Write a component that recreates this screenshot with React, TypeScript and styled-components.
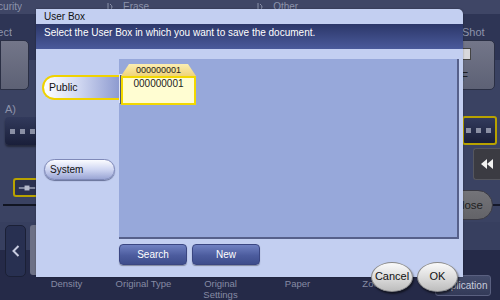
import React from 'react'
import styled, { createGlobalStyle } from 'styled-components'

const GlobalStyle = createGlobalStyle`
  html, body {
    margin: 0;
    padding: 0;
    overflow: hidden;
    background: #252a48;
  }
  body {
    font-family: "Liberation Sans", Arial, sans-serif;
  }
`

const footerLabels = ['Density', 'Original Type', 'Original\nSettings', 'Paper', 'Zoom']

const DoubleLeft = () => (
    <svg width="12" height="10" viewBox="0 0 12 10">
        <polygon points="6,0 6,10 0,5" fill="#f2f2f2" />
        <polygon points="12,0 12,10 6,5" fill="#f2f2f2" />
    </svg>
)

const Chevron = () => (
    <svg width="8" height="12" viewBox="0 0 8 12">
        <polyline points="6.5,1 1.5,6 6.5,11" fill="none" stroke="#c8cce0" strokeWidth="2" />
    </svg>
)

const SliderGlyph = () => (
    <svg width="22" height="8" viewBox="0 0 22 8">
        <line x1="1" y1="4" x2="21" y2="4" stroke="#b8bccc" strokeWidth="1.5" />
        <rect x="8" y="1" width="6" height="6" fill="#b8bccc" />
    </svg>
)

const TabMark = () => (
    <svg width="8" height="10" viewBox="0 0 8 10">
        <line x1="1" y1="1" x2="1" y2="9" stroke="#8d93ab" strokeWidth="1" />
        <path d="M3 2 Q7 5 3 8" fill="none" stroke="#8d93ab" strokeWidth="1" />
    </svg>
)

export default function App() {
    return (
        <>
            <GlobalStyle />
            <Screen>
                <TopTabs>
                    <ClipCell width={22}><span>Security</span></ClipCell>
                    <TabCell offset={85}><TabMark /><span>Erase</span></TabCell>
                    <TabCell offset={108}><TabMark /><span>Other</span></TabCell>
                </TopTabs>

                <Middle>
                    <SideColumn width={36}>
                        <ClipCell width={12}><SideLabel>Select</SideLabel></ClipCell>
                        <GrayTile width={15} />
                        <SideLabel indent={5} gap={13}>A)</SideLabel>
                        <DotBox>
                            <Dot /><Dot /><Dot />
                        </DotBox>
                        <SliderBox><SliderGlyph /></SliderBox>
                        <Rule />
                    </SideColumn>

                    <SideColumn width={80}>
                        <SideLabel indent={42}>Shot</SideLabel>
                        <GrayTile width={75}>
                            <DocGlyph />
                            <TileText>PDF</TileText>
                        </GrayTile>
                        <SideLabel indent={42} gap={13}>&nbsp;</SideLabel>
                        <YellowBox>
                            <Dot /><Dot /><Dot />
                        </YellowBox>
                        <RewindButton><DoubleLeft /></RewindButton>
                        <CloseRow>
                            <ClosePill>Close</ClosePill>
                            <CloseLine />
                        </CloseRow>
                    </SideColumn>
                </Middle>

                <Bottom>
                    <NavRow>
                        <BackButton><Chevron /></BackButton>
                        <NavTile />
                    </NavRow>
                    <LabelRow>
                        {footerLabels.map((l, i) => <FooterLabel key={i}>{l}</FooterLabel>)}
                        <AppButton>Application</AppButton>
                    </LabelRow>
                </Bottom>

                <Dialog>
                    <DialogTitle>User Box</DialogTitle>
                    <DialogPrompt>Select the User Box in which you want to save the document.</DialogPrompt>
                    <DialogBody>
                        <SideNav>
                            <PublicTab>Public</PublicTab>
                            <SystemTab>System</SystemTab>
                        </SideNav>
                        <ContentColumn>
                            <BoxPanel>
                                <Folder>
                                    <FolderTab>000000001</FolderTab>
                                    <FolderBody>000000001</FolderBody>
                                </Folder>
                            </BoxPanel>
                            <ButtonRow>
                                <BlueButton>Search</BlueButton>
                                <BlueButton>New</BlueButton>
                            </ButtonRow>
                        </ContentColumn>
                    </DialogBody>
                </Dialog>

                <Actions>
                    <RoundButton width={42}>Cancel</RoundButton>
                    <RoundButton width={41}>OK</RoundButton>
                </Actions>
            </Screen>
        </>
    )
}

const Screen = styled.div`
    position: relative;
    width: 500px;
    height: 300px;
    overflow: hidden;
    display: grid;
    grid-template-rows: 14px 208px 78px;
    background: #343b5a;
`

const TopTabs = styled.div`
    display: flex;
    align-items: flex-start;
    background: #3f4666;
    color: #8d93ab;
    font-size: 10px;
    line-height: 14px;
    white-space: nowrap;
`

const ClipCell = styled.div<{ width: number }>`
    width: ${p => p.width}px;
    flex-shrink: 0;
    overflow: hidden;
    display: flex;
    justify-content: flex-end;
    white-space: nowrap;
`

const TabCell = styled.div<{ offset: number }>`
    display: flex;
    align-items: center;
    gap: 8px;
    margin-left: ${p => p.offset}px;
    height: 14px;
`

const Middle = styled.div`
    display: flex;
    justify-content: space-between;
`

const SideColumn = styled.div<{ width: number }>`
    width: ${p => p.width}px;
    display: flex;
    flex-direction: column;
    padding-top: 12px;
    background: linear-gradient(#2e3555 0 46px, #3a4262 46px);
`

const SideLabel = styled.div<{ indent?: number; gap?: number }>`
    height: 12px;
    margin-top: ${p => p.gap ?? 0}px;
    padding-left: ${p => p.indent ?? 0}px;
    color: #8d93ab;
    font-size: 11px;
    line-height: 12px;
    white-space: nowrap;
`

const GrayTile = styled.div<{ width: number }>`
    position: relative;
    width: ${p => p.width}px;
    height: 50px;
    margin-top: 2px;
    box-sizing: border-box;
    border: 1px solid #2a2f44;
    border-radius: 0 5px 5px 0;
    background: linear-gradient(#737689, #5d6175);
    display: flex;
    flex-direction: column;
    align-items: flex-end;
    padding: 7px 27px 0 0;
`

const DocGlyph = styled.div`
    width: 7px;
    height: 10px;
    margin-right: -4px;
    background: #d8d8dc;
    border: 1px solid #444;
`

const TileText = styled.div`
    margin-top: 10px;
    margin-right: -1px;
    color: #1e1e24;
    font-size: 12px;
`

const DotBox = styled.div`
    margin: 2px 0 0 5px;
    height: 28px;
    border-radius: 4px 0 0 4px;
    background: linear-gradient(#323a5c, #1a1f3a);
    box-shadow: 0 2px 2px rgba(0, 0, 0, 0.4);
    display: flex;
    align-items: center;
    gap: 5px;
    padding-left: 5px;
`

const Dot = styled.span`
    width: 5px;
    height: 5px;
    background: #8a8fa4;
`

const SliderBox = styled.div`
    margin: 33px 0 0 13px;
    height: 19px;
    box-sizing: border-box;
    border: 2px solid #b8a200;
    border-right: none;
    border-radius: 3px 0 0 3px;
    background: #2b3150;
    display: flex;
    align-items: center;
    padding-left: 3px;
`

const Rule = styled.div`
    margin: 7px 0 0 3px;
    height: 2px;
    background: #111522;
`

const YellowBox = styled.div`
    margin-top: 1px;
    margin-left: 42px;
    width: 35px;
    height: 29px;
    box-sizing: border-box;
    border: 2px solid #b8a200;
    border-radius: 3px;
    background: linear-gradient(#323a5c, #1a1f3a);
    display: flex;
    align-items: center;
    justify-content: flex-end;
    gap: 5px;
    padding-right: 4px;
`

const RewindButton = styled.div`
    margin: 3px 0 0 53px;
    height: 32px;
    box-sizing: border-box;
    border: 1px solid #55565e;
    border-right: none;
    border-radius: 3px 0 0 3px;
    background: #3b3b42;
    display: flex;
    align-items: center;
    justify-content: center;
`

const CloseRow = styled.div`
    margin-top: 10px;
    display: flex;
    align-items: center;
`

const ClosePill = styled.div`
    width: 73px;
    height: 30px;
    box-sizing: border-box;
    border-radius: 15px;
    background: linear-gradient(#747479, #636368);
    border: 1px solid #3a3a44;
    color: #222;
    font-size: 11.5px;
    line-height: 28px;
    text-align: right;
    padding-right: 9px;
`

const CloseLine = styled.div`
    flex: 1;
    height: 2px;
    background: #15182a;
`

const Bottom = styled.div`
    display: grid;
    grid-template-rows: 53px 25px;
    background: linear-gradient(#373f5f 0 28px, #252a48 28px);
`

const NavRow = styled.div`
    display: flex;
    align-items: flex-start;
    gap: 4px;
    padding: 3px 0 0 5px;
`

const BackButton = styled.div`
    width: 21px;
    height: 52px;
    box-sizing: border-box;
    border: 1px solid #1b2036;
    border-radius: 5px;
    background: #283051;
    display: flex;
    align-items: center;
    justify-content: center;
`

const NavTile = styled.div`
    width: 12px;
    height: 50px;
    border-radius: 3px;
    background: #6d7186;
`

const LabelRow = styled.div`
    display: flex;
    align-items: flex-start;
    padding-left: 28px;
`

const FooterLabel = styled.div`
    width: 77px;
    padding-top: 3px;
    color: #858ba4;
    font-size: 9.5px;
    line-height: 11px;
    text-align: center;
    white-space: pre-line;
`

const AppButton = styled.div`
    margin-left: 22px;
    width: 56px;
    height: 21px;
    box-sizing: border-box;
    border: 1px solid #5a6080;
    border-radius: 3px;
    background: linear-gradient(#444c6c, #333a58);
    color: #c8ccdc;
    font-size: 10px;
    line-height: 19px;
    text-align: center;
`

const Dialog = styled.div`
    position: absolute;
    left: 36px;
    top: 9px;
    width: 427px;
    height: 268px;
    display: flex;
    flex-direction: column;
    border-radius: 0 5px 0 0;
    background: #c3cff1;
    box-shadow: 0 0 2px rgba(0, 0, 0, 0.35);
    overflow: hidden;
`

const DialogTitle = styled.div`
    height: 15px;
    padding-left: 8px;
    color: #111;
    font-size: 10px;
    line-height: 15px;
`

const DialogPrompt = styled.div`
    height: 25px;
    box-sizing: border-box;
    padding: 3px 0 0 8px;
    background: linear-gradient(#2c3769, #4a5a9b);
    color: #fff;
    font-size: 10px;
    line-height: 12px;
`

const DialogBody = styled.div`
    flex: 1;
    display: flex;
    padding: 10px 4px 0 0;
`

const SideNav = styled.div`
    width: 83px;
    display: flex;
    flex-direction: column;
    align-items: flex-end;
    padding-top: 16px;
`

const PublicTab = styled.div`
    width: 77px;
    height: 25px;
    box-sizing: border-box;
    border: 2px solid #efd200;
    border-right: none;
    border-radius: 13px 0 0 13px;
    background: linear-gradient(90deg, #ffffff 0%, #d2d9f2 45%, #8e9bd0 100%);
    color: #111;
    font-size: 10.5px;
    line-height: 21px;
    padding-left: 5px;
`

const SystemTab = styled.div`
    width: 71px;
    height: 21px;
    margin: 59px 4px 0 0;
    box-sizing: border-box;
    border: 1px solid #7f89b8;
    border-radius: 11px;
    background: linear-gradient(#fbfcff, #cfd6f2 50%, #9aa5d4);
    box-shadow: 0 1px 1px rgba(40, 48, 90, 0.6);
    color: #111;
    font-size: 10px;
    line-height: 19px;
    padding-left: 5px;
`

const ContentColumn = styled.div`
    width: 340px;
    display: flex;
    flex-direction: column;
`

const BoxPanel = styled.div`
    height: 180px;
    box-sizing: border-box;
    border-right: 2px solid #56608a;
    border-bottom: 2px solid #56608a;
    background: #97a8da;
    padding: 5px 0 0 2px;
`

const Folder = styled.div`
    width: 75px;
    display: flex;
    flex-direction: column;
`

const FolderTab = styled.div`
    height: 12px;
    clip-path: polygon(8px 0, calc(100% - 8px) 0, 100% 100%, 0 100%);
    background: linear-gradient(#fbeeb2, #efd47a);
    color: #222;
    font-size: 9px;
    line-height: 13px;
    text-align: center;
`

const FolderBody = styled.div`
    height: 29px;
    box-sizing: border-box;
    border: 2px solid #f2d800;
    background: #fffdd2;
    box-shadow: -1px -1px 0 #4e5670, -2px -2px 0 #dfe3f3;
    color: #222;
    font-size: 10px;
    line-height: 12px;
    text-align: center;
`

const ButtonRow = styled.div`
    display: flex;
    gap: 5px;
    margin-top: 5px;
`

const BlueButton = styled.div`
    width: 68px;
    height: 21px;
    box-sizing: border-box;
    border: 1px solid #3a4682;
    border-radius: 4px;
    background: linear-gradient(#7081c2, #4c5c9e 55%, #3e4d8c);
    box-shadow: 0 1px 1px rgba(0, 0, 0, 0.35);
    color: #fff;
    font-size: 10px;
    line-height: 19px;
    text-align: center;
`

const Actions = styled.div`
    position: absolute;
    left: 371px;
    top: 262px;
    display: flex;
    gap: 4px;
`

const RoundButton = styled.div<{ width: number }>`
    width: ${p => p.width}px;
    height: 30px;
    box-sizing: border-box;
    border: 1px solid #8a8a8a;
    border-radius: 50%;
    background: linear-gradient(#fafafa, #dadada 55%, #bdbdbd);
    box-shadow: 1px 2px 2px rgba(0, 0, 0, 0.55);
    color: #111;
    font-size: 11px;
    line-height: 27px;
    text-align: center;
`
